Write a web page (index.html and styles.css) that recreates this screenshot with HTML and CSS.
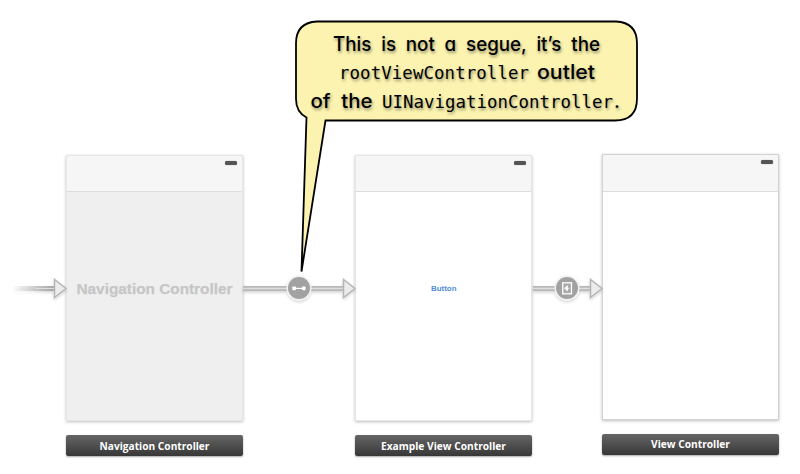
FILE: index.html
```
<!DOCTYPE html>
<html lang="en">
<head>
<meta charset="utf-8">
<title>Storyboard</title>
<link rel="stylesheet" href="styles.css">
</head>
<body>
<main class="canvas">
  <section class="scene scene-nav">
    <div class="screen screen-gray">
      <div class="bar"><i class="battery"></i></div>
      <div class="content"><svg class="fit" width="177" height="30"><text class="placeholder" x="10.500" y="19" textLength="156" lengthAdjust="spacingAndGlyphs">Navigation Controller</text></svg></div>
    </div>
    <div class="caption"><svg class="fit" width="177" height="21"><text class="title" x="33.500" y="14.500" textLength="110" lengthAdjust="spacingAndGlyphs">Navigation Controller</text></svg></div>
  </section>
  <section class="scene scene-example">
    <div class="screen">
      <div class="bar"><i class="battery"></i></div>
      <div class="content"><svg class="fit" width="177" height="30"><text class="button" x="76" y="15.500" textLength="25.500" lengthAdjust="spacingAndGlyphs">Button</text></svg></div>
    </div>
    <div class="caption"><svg class="fit" width="177" height="21"><text class="title" x="26" y="14.500" textLength="125" lengthAdjust="spacingAndGlyphs">Example View Controller</text></svg></div>
  </section>
  <section class="scene scene-view">
    <div class="screen screen-sharp">
      <div class="bar"><i class="battery"></i></div>
      <div class="content"></div>
    </div>
    <div class="caption"><svg class="fit" width="177" height="21"><text class="title" x="49" y="14" textLength="79" lengthAdjust="spacingAndGlyphs">View Controller</text></svg></div>
  </section>

  <svg class="overlay" width="800" height="474" viewBox="0 0 800 474">
    <defs>
      <linearGradient id="fade"><stop offset="0" stop-color="#aaa" stop-opacity="0"/><stop offset="1" stop-color="#a6a6a6"/></linearGradient>
      <filter id="soft" x="-30%" y="-30%" width="160%" height="170%"><feDropShadow dx="0" dy="1.500" stdDeviation="1.500" flood-color="#000" flood-opacity=".18"/></filter>
    </defs>

    <g filter="url(#soft)">
      <path d="M12 286H54V291H12z" fill="url(#fade)"/>
      <path d="M35 288.500H54" stroke="#dedede"/>
      <path class="arrow" d="M54.500 279.500v18L66 288.500z"/>
    </g>

    <g filter="url(#soft)">
      <path class="wire" d="M243 286h100v5H243z"/>
      <path class="core" d="M243 288.500h100"/>
      <path class="arrow" d="M343.500 279.500v18L355 288.500z"/>
      <circle class="halo" cx="299" cy="288" r="12.500"/>
      <circle class="node" cx="299" cy="288" r="11"/>
      <path d="M295 288.400h8" stroke="#fff" stroke-width="1.200"/>
      <rect x="292.300" y="286.500" width="3.600" height="3.800" rx=".8" fill="#fff"/>
      <rect x="302" y="286.500" width="3.600" height="3.800" rx=".8" fill="#fff"/>
    </g>

    <g filter="url(#soft)">
      <path class="wire" d="M533 286h57v5h-57z"/>
      <path class="core" d="M533 288.500h57"/>
      <path class="arrow" d="M590.500 279.500v18L602 288.500z"/>
      <circle class="halo" cx="567" cy="288" r="12.500"/>
      <circle class="node" cx="567" cy="288" r="11"/>
      <rect x="562.700" y="282.800" width="8.800" height="11" fill="#aaa" stroke="#fff" stroke-width="1.300"/>
      <path d="M569.500 288.300h-4M567.500 285.800l-3 2.500 3 2.500z" stroke="#fff" stroke-width=".8" fill="#fff"/>
    </g>

    <path class="bubble" d="M317 21.500H616Q637 22.500 637 43.500V98.500Q637 120.500 615 120.500H325.500L301.500 271.500 306.500 117.500Q296 112 296 99V43.500Q296 22.500 317 21.500z"/>
    <g class="note">
      <text class="hand wide" x="333" y="51" textLength="267" lengthAdjust="spacingAndGlyphs">This is not a segue, it’s the</text>
      <text class="code" x="339" y="79" textLength="190">rootViewController</text>
      <text class="hand" x="537" y="79" textLength="58" lengthAdjust="spacingAndGlyphs">outlet</text>
      <text class="hand wide" x="310.500" y="108" textLength="62" lengthAdjust="spacingAndGlyphs">of the</text>
      <text class="code" x="382" y="107.500" textLength="231">UINavigationController</text>
      <text class="hand" x="614" y="107.500">.</text>
    </g>
  </svg>
</main>
</body>
</html>
```
FILE: styles.css
```
body { margin: 0; background: #fff; }
.canvas { position: relative; width: 800px; height: 474px; overflow: hidden; background: #fff; }
.scene { position: absolute; width: 177px; display: flex; flex-direction: column; gap: 15px; }
.scene-nav { left: 66px; top: 155px; }
.scene-example { left: 355px; top: 155px; }
.scene-view { left: 602px; top: 154px; }
.screen { height: 266px; margin-bottom: -1px; box-sizing: border-box; display: flex; flex-direction: column; background: #fff; border: 1px solid #e6e6e6; box-shadow: 0 1px 3px rgba(0,0,0,.25); }
.screen-gray { background: #efefef; }
.screen-sharp { border-color: #d2d2d2; }
.bar { height: 35px; display: flex; justify-content: flex-end; background: #f6f6f6; border-bottom: 1px solid #dcdcdc; }
.screen-sharp .bar { height: 36px; }
.battery { width: 12px; height: 4px; margin: 4.500px 5px 0 0; border-radius: 1.500px; background: #555; box-shadow: 0 0 1px #888; }
.content { flex: 1; display: flex; justify-content: center; padding-top: 83px; }
.fit { display: block; flex: none; }
.placeholder { font: bold 15.500px "Liberation Sans", sans-serif; fill: #c6c6c6; stroke: #c6c6c6; stroke-width: .25px; }
.button { font: bold 7.500px "Liberation Sans", sans-serif; fill: #528dd9; }
.caption { height: 21px; border-radius: 2px; background: linear-gradient(#666, #373737); box-shadow: 0 1px 2px rgba(0,0,0,.35); }
.title { font: bold 11px "Open Sans", sans-serif; fill: #fff; }
.overlay { position: absolute; left: 0; top: 0; }
.wire { fill: #b8b8b8; }
.core { stroke: #dedede; stroke-width: 1.500; }
.arrow { fill: #ececec; stroke: #b5b5b5; stroke-width: 1.500; }
.halo { fill: #f2f2f2; }
.node { fill: #a2a2a2; }
.bubble { fill: #fbf3af; stroke: #000; stroke-width: 1.800; stroke-linejoin: miter; }
.note { fill: #000; text-shadow: 1px 2px 3px rgba(0,0,0,.4); }
.hand { font: 500 19.500px Inter, sans-serif; font-feature-settings: "cv11" 1; }
.wide { word-spacing: 5px; }
.code { font: 17.400px "DejaVu Sans Mono", monospace; }
```
